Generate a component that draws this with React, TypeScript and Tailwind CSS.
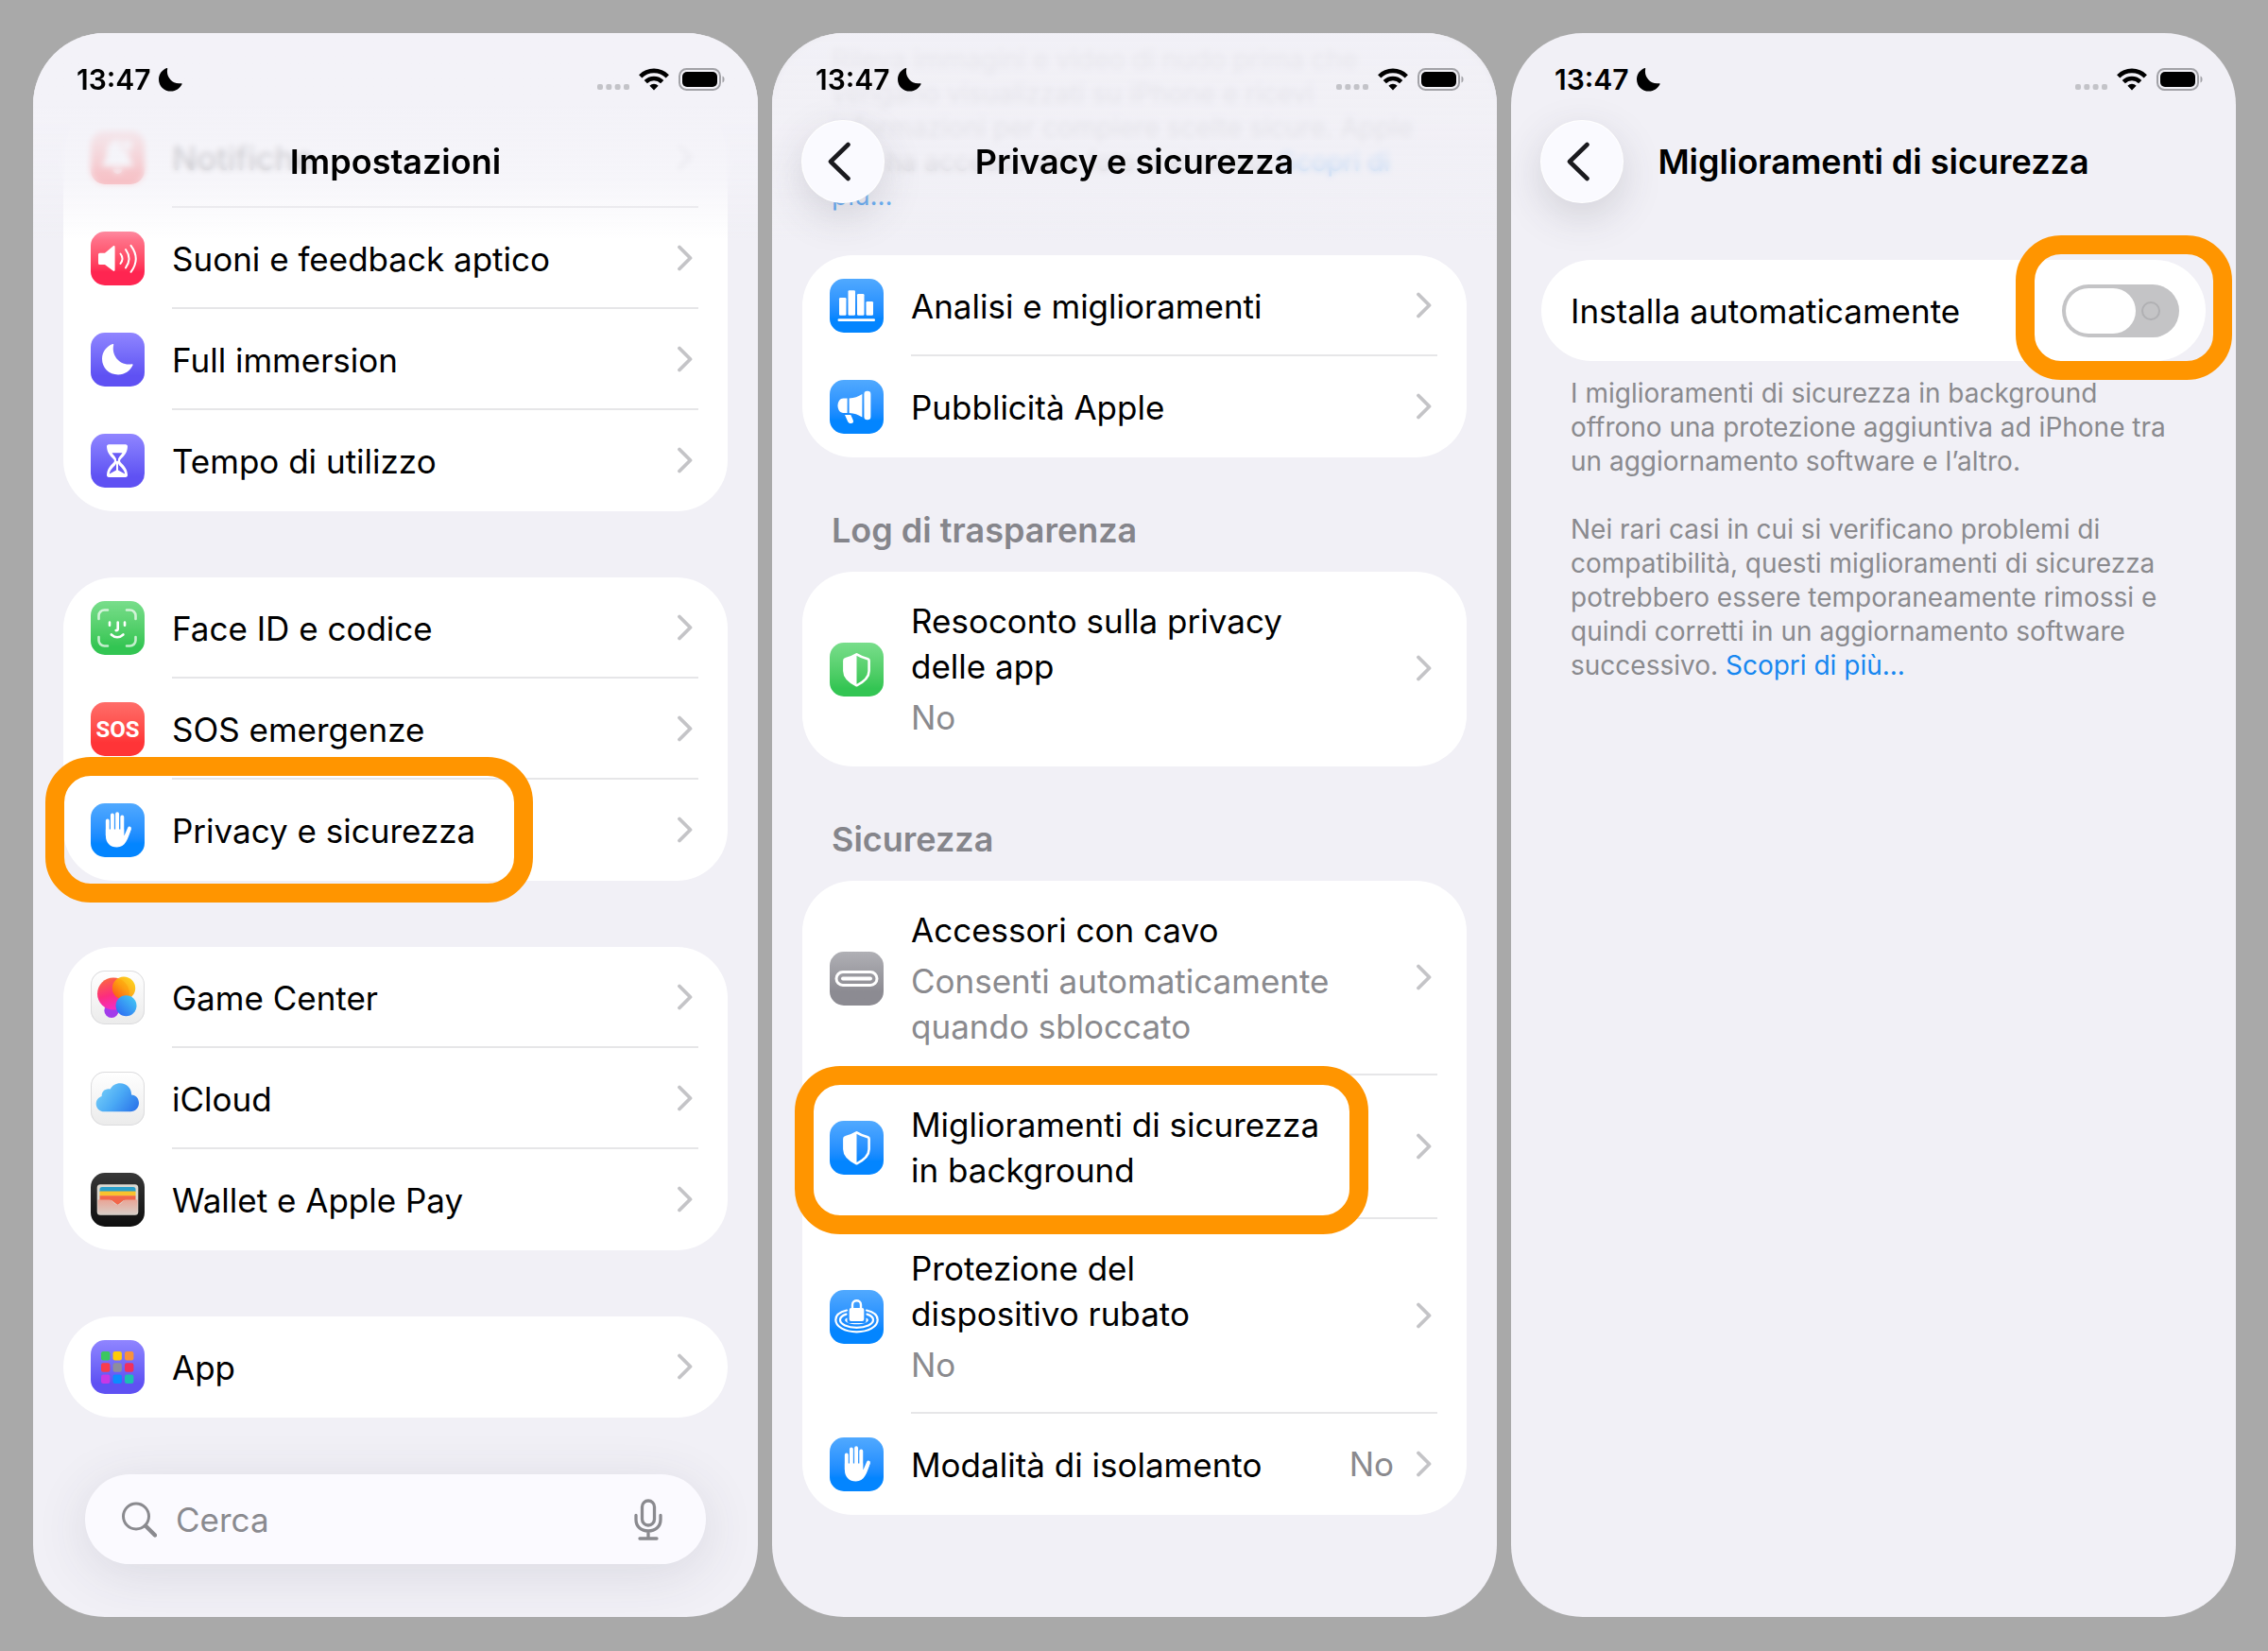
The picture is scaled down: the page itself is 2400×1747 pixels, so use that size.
import type { ReactNode } from 'react'
import clsx from 'clsx'

/* ---------- Glyphs, drawn on a 57x57 tile ---------- */

function BellGlyph() {
    return (
        <g fill="#fff">
            <path d="M28.5 10c-7 0-11 5-11.500 12-.5 8-2 10-4.500 13-1 1.500 0 3 1.500 3h29c1.500 0 2.500-1.500 1.500-3-2.500-3-4-5-4.500-13-.5-7-4.500-12-11.500-12z" />
            <path d="M23.500 41h10a5 5 0 0 1-10 0z" />
            <circle cx="38.500" cy="15.500" r="6" stroke="#ff6d69" strokeWidth="2" />
        </g>
    )
}

function SoundGlyph() {
    return (
        <g>
            <path
                d="M9.500 22.700H15l8.600-7.300c.9-.7 2-.3 2 .8v24.600c0 1.100-1.100 1.500-2 .8L15 35H9.500A1.500 1.500 0 0 1 8 33.500v-9.300a1.500 1.500 0 0 1 1.500-1.500z"
                fill="#fff"
            />
            <g fill="none" stroke="#fff" strokeWidth="2" strokeLinecap="round">
                <path d="M31.500 23.500q4 5.200 0 10.400" />
                <path d="M37 19q7 9.700 0 19.400" />
                <path d="M42.500 14.800q10.500 14 0 28" />
            </g>
        </g>
    )
}

function MoonGlyph() {
    return (
        <path
            d="M23.200 12.100c.6-.3 1.200.2 1 .9-2.500 10.500 6 22.500 19.300 20.300.8-.1 1.300.5 1 1.200C41.700 40.300 36 44.500 29 44.500c-9.600 0-17-7.300-17-16.700 0-7.200 4.500-13.200 11.200-15.700z"
            fill="#fff"
        />
    )
}

function HourglassGlyph() {
    return (
        <g>
            <path
                d="M19.200 11.300h17.600c1.500 0 2.300.9 2.200 2.500-.4 6.400-3.400 9.400-7.200 13.200-1 1-1 2.200 0 3.200 3.800 3.800 6.800 7 7.200 13.300.1 1.600-.7 2.500-2.200 2.500H19.200c-1.500 0-2.300-.9-2.200-2.500.4-6.300 3.400-9.500 7.200-13.300 1-1 1-2.200 0-3.200-3.800-3.800-6.800-6.800-7.200-13.200-.1-1.600.7-2.500 2.200-2.500z"
                fill="#fff"
            />
            <path d="M22.500 20.300h11c-1.500 2.600-4 4.200-4.500 6.500v4.400c.5 3 6.500 5.500 7.200 11.300L29 38.400v-9.600h-2v9.600l-7.200 4.100c.7-5.800 6.700-8.300 7.200-11.300v-4.400c-.5-2.300-3-3.900-4.500-6.500z" fill="#6a5cf6" />
        </g>
    )
}

function FaceGlyph() {
    return (
        <g fill="none" stroke="#fff" strokeWidth="2.600" strokeLinecap="round">
            <g opacity=".7">
                <path d="M8.500 19v-3.500a6 6 0 0 1 6-6H18" />
                <path d="M38 9.500h3.500a6 6 0 0 1 6 6V19" />
                <path d="M47.500 38v3.500a6 6 0 0 1-6 6H38" />
                <path d="M18 47.500h-3.500a6 6 0 0 1-6-6V38" />
            </g>
            <path d="M20 22.500v3.200M36 22.500v3.200M28.700 22.500v7c0 1.100-.7 1.600-2 1.600" />
            <path d="M21.800 35.500c3.800 3.600 8.800 3.600 12.600 0" />
        </g>
    )
}

function HandGlyph() {
    return (
        <g fill="#fff" stroke="#fff" strokeLinecap="round">
            <g strokeWidth="3.900">
                <path d="M17.800 18.500V34M22.900 12.500V34M28.100 11.300V34M33.300 14.500V34" />
                <path d="M41 26.500L36 38" />
            </g>
            <path
                d="M15.900 27.500h19.300v6.800c1.600-.6 2.800-3.400 4-6.800l3.600-.3c-1.600 5-3.300 10-5.500 13.600-2.200 3.700-5.200 5.700-9.600 5.700-7 0-11.800-4.500-11.800-12z"
                stroke="none"
            />
        </g>
    )
}

function GameCenterGlyph() {
    return (
        <g>
            <defs>
                <linearGradient id="gc-pink" x1="0" y1="0" x2=".3" y2="1">
                    <stop offset="0" stopColor="#fb7036" />
                    <stop offset=".6" stopColor="#fc2d7e" />
                    <stop offset="1" stopColor="#f52bc0" />
                </linearGradient>
                <linearGradient id="gc-sun" x1="1" y1="0" x2="0" y2="1">
                    <stop offset="0" stopColor="#fddc10" />
                    <stop offset=".5" stopColor="#fda50a" />
                    <stop offset="1" stopColor="#fb4a12" />
                </linearGradient>
                <linearGradient id="gc-blue" x1="1" y1="0" x2="0" y2="1">
                    <stop offset="0" stopColor="#45d0f5" />
                    <stop offset="1" stopColor="#2b62f2" />
                </linearGradient>
            </defs>
            <circle cx="22" cy="42.500" r="7.600" fill="#a23bea" />
            <circle cx="24" cy="24.500" r="17" fill="url(#gc-pink)" />
            <circle cx="35" cy="18.700" r="12.200" fill="url(#gc-sun)" opacity=".93" />
            <circle cx="37.500" cy="37.300" r="11" fill="url(#gc-blue)" />
        </g>
    )
}

function CloudGlyph() {
    return (
        <g>
            <defs>
                <linearGradient id="cloud-blue" x1="0" y1=".3" x2="1" y2=".8">
                    <stop offset="0" stopColor="#74cdf8" />
                    <stop offset=".5" stopColor="#4aa9f5" />
                    <stop offset="1" stopColor="#2c76ea" />
                </linearGradient>
            </defs>
            <path
                d="M14.500 42.300c-5 0-8.800-3.600-8.800-8.300 0-4 2.400-7 6-8.100-.6-4.500 4-8.700 8.900-7.300 2-4 5.900-6.300 10.500-6.300 7 0 12 5.200 12 12.100 4.600.1 7.900 3.800 7.900 8.700 0 5.200-3.800 9.200-9 9.200z"
                fill="url(#cloud-blue)"
            />
        </g>
    )
}

function WalletGlyph() {
    return (
        <g>
            <defs>
                <linearGradient id="wallet-pocket" x1="0" y1="0" x2="0" y2="1">
                    <stop offset="0" stopColor="#e9a596" />
                    <stop offset="1" stopColor="#d8cdc6" />
                </linearGradient>
            </defs>
            <rect x="6.700" y="12.300" width="43.600" height="32.400" rx="3.500" fill="#dcd8d0" />
            <path d="M9.500 20v-2.500a2.500 2.500 0 0 1 2.500-2.500h33a2.500 2.500 0 0 1 2.500 2.500V20z" fill="#2b9fc9" />
            <rect x="9.500" y="19.500" width="38" height="5" fill="#f9c22e" />
            <path d="M9.500 24.300h38V29H35l-6.500 5-6.500-5H9.500z" fill="#f2664a" />
            <path
                d="M7.500 28.500H20c1.500 0 2.200.8 3.300 2.200 3 4 7.400 4 10.400 0 1.100-1.400 1.800-2.200 3.300-2.200h12.500V41a3 3 0 0 1-3 3h-36a3 3 0 0 1-3-3z"
                fill="url(#wallet-pocket)"
            />
        </g>
    )
}

const appColors = ['#3cc760', '#ffcc0a', '#f8923c', '#f83c4c', '#8e8e9c', '#f0305e', '#c838e6', '#0a8cff', '#1cc0b0']

function AppGridGlyph() {
    return (
        <g>
            {appColors.map((color, i) => (
                <rect
                    key={color}
                    x={11 + (i % 3) * 12.5}
                    y={12 + Math.floor(i / 3) * 12.3}
                    width="9.400"
                    height="9.400"
                    rx="2.200"
                    fill={color}
                />
            ))}
        </g>
    )
}

function ChartGlyph() {
    return (
        <g fill="#fff">
            <rect x="10" y="20" width="7.500" height="18.700" rx="1.200" />
            <rect x="19.500" y="12.300" width="7.500" height="26.400" rx="1.200" />
            <rect x="29" y="16" width="7.500" height="22.700" rx="1.200" />
            <rect x="38.500" y="24" width="7.500" height="14.700" rx="1.200" />
            <rect x="8.500" y="42.300" width="39.500" height="2.700" rx="1.300" />
        </g>
    )
}

function MegaphoneGlyph() {
    return (
        <g fill="#fff">
            <path d="M18.600 19.500V35h-4.200c-3.500 0-5.900-3.300-5.900-7.700s2.400-7.800 5.900-7.800z" />
            <path d="M20.600 19.500c5.500-.3 9.500-1.800 13.800-4.500v24.500c-4.300-2.700-8.300-4.200-13.800-4.500z" />
            <rect x="36.400" y="11.700" width="7" height="30.600" rx="3.300" />
            <path d="M16 37h6.300l2.500 5.800c.8 2-.4 3.300-2.200 3.300-1.700 0-3-.8-3.600-2.300z" />
        </g>
    )
}

function ShieldGlyph() {
    return (
        <g>
            <path
                d="M28.500 12.300c3.500 2.200 7.400 3.700 11.800 4.900.9.200 1.300.8 1.300 1.700V30c0 7-5.500 11.500-13.100 15.300C20.900 41.500 15.400 37 15.400 30V18.900c0-.9.400-1.500 1.300-1.700 4.400-1.200 8.300-2.700 11.800-4.900z"
                fill="none"
                stroke="#fff"
                strokeWidth="2.600"
                strokeLinejoin="round"
            />
            <path d="M28.500 12.300v33C20.900 41.500 15.400 37 15.400 30V18.900c0-.9.400-1.500 1.300-1.700 4.400-1.200 8.300-2.700 11.800-4.900z" fill="#fff" />
        </g>
    )
}

function CablePortGlyph() {
    return (
        <g>
            <rect x="7" y="21.600" width="43" height="13.800" rx="6.900" fill="none" stroke="#fff" strokeWidth="3" />
            <rect x="12" y="26.500" width="33" height="4" rx="2" fill="#fff" />
        </g>
    )
}

function LockRipplesGlyph() {
    return (
        <g>
            <g fill="none" stroke="#fff" strokeWidth="2.200" strokeLinecap="round">
                <path d="M18 21.500C10.500 23.200 6.300 27 6.300 31.500c0 7.300 9.800 12.800 22.200 12.800s22.200-5.500 22.200-12.800c0-4.500-4.200-8.300-11.700-10" />
                <path d="M17.500 25.600c-4 1.300-6.500 3.500-6.500 6 0 4.800 7.700 8.200 17.500 8.200s17.500-3.400 17.500-8.200c0-2.500-2.500-4.700-6.500-6" />
            </g>
            <path d="M18.500 29.500c-1.500.7-2.300 1.500-2.300 2.300 0 2.600 5.500 4.500 12.300 4.500s12.300-1.900 12.300-4.500c0-.8-.8-1.600-2.300-2.300v3.300c0 1.500-1 2.200-2.400 2.200H20.900c-1.400 0-2.400-.7-2.400-2.200z" fill="#fff" />
            <rect x="20.700" y="19" width="15.600" height="14" rx="2" fill="#fff" />
            <path d="M24 19.500v-3.700c0-6 9-6 9 0v3.700" fill="none" stroke="#fff" strokeWidth="2.400" />
        </g>
    )
}

/* ---------- Building blocks ---------- */

const tones = {
    pink: 'bg-linear-to-b from-[#ff7d95] to-[#ff2551] to-75%',
    indigo: 'bg-linear-to-b from-[#9085ff] to-[#5f51f3] to-80%',
    green: 'bg-linear-to-b from-[#78de8b] to-[#33c553] to-85%',
    red: 'bg-linear-to-b from-[#ff6d69] to-[#ff3437] to-75%',
    blue: 'bg-linear-to-b from-[#50a9ff] to-[#0385ff] to-75%',
    gray: 'bg-linear-to-b from-[#b0b0b5] to-[#8c8b92] to-75%',
    white: 'bg-linear-to-b from-white to-[#ebebeb] ring-1 ring-inset ring-[#dcdcde]',
    black: 'bg-linear-to-b from-[#383838] to-[#0e0e0e]',
}

function Tile({ tone, children }: { tone: keyof typeof tones; children: ReactNode }) {
    return (
        <span className={clsx('block size-[57px] shrink-0 overflow-hidden rounded-[15px]', tones[tone])}>
            <svg viewBox="0 0 57 57" className="size-full" aria-hidden="true">
                {children}
            </svg>
        </span>
    )
}

function SosTile() {
    return (
        <span
            className={clsx(
                'flex size-[57px] shrink-0 items-center justify-center rounded-[15px] font-[Roboto,sans-serif] text-[24px] font-bold text-white',
                tones.red,
            )}
        >
            SOS
        </span>
    )
}

function Chevron() {
    return (
        <svg viewBox="0 0 16 28" className="h-7 w-4 shrink-0" aria-hidden="true">
            <path d="M2 2.500L13.500 14L2 25.500" fill="none" stroke="#c4c4c7" strokeWidth="3.800" strokeLinecap="round" strokeLinejoin="round" />
        </svg>
    )
}

interface RowProps {
    icon: ReactNode
    title: string
    detail?: string
    value?: string
    highlight?: string
}

function Row({ icon, title, detail, value, highlight }: RowProps) {
    return (
        <li className="group relative">
            <a href="#" className="flex min-h-[107px] items-stretch gap-[29px] pl-[29px]">
                <span className="flex items-center">{icon}</span>
                <span className="mr-[31px] flex flex-1 items-center border-b-2 border-[#e6e6e8] pr-1.5 group-last:border-transparent">
                    <span className="flex max-w-[460px] flex-1 flex-col gap-1.5 pt-7 pb-[26px] whitespace-pre-line">
                        <span>{title}</span>
                        {detail && <span className="text-[#8a8a8e]">{detail}</span>}
                    </span>
                    <span className="ml-auto flex items-center gap-6 text-[#8a8a8e]">
                        {value}
                        <Chevron />
                    </span>
                </span>
            </a>
            {highlight && <Highlight className={highlight} />}
        </li>
    )
}

function Highlight({ className }: { className: string }) {
    return (
        <span className={clsx('pointer-events-none absolute z-10 rounded-[48px] border-[20px] border-[#ff9500]', className)} />
    )
}

function Card({ children }: { children: ReactNode }) {
    return <ul className="rounded-[54px] bg-white">{children}</ul>
}

function SectionTitle({ children }: { children: ReactNode }) {
    return <h2 className="px-[31px] pt-[53px] pb-5 text-[36px] font-semibold text-[#85858b]">{children}</h2>
}

function StatusBar() {
    return (
        <div className="mb-6 flex h-10 items-center justify-between pr-[34px] pl-[46px]">
            <div className="flex items-center gap-2 text-[30px] leading-10 font-semibold">
                13:47
                <svg viewBox="0 0 33 33" className="size-[25px]" aria-hidden="true">
                    <path d="M11.200 .1c.6-.3 1.200.2 1 .9-2.500 10.500 6 22.500 19.300 20.300.8-.1 1.300.5 1 1.200C29.700 28.300 24 32.500 17 32.500 7.400 32.500 0 25.200 0 15.800 0 8.600 4.500 2.600 11.200.1z" />
                </svg>
            </div>
            <div className="flex items-center gap-2.5">
                <svg viewBox="0 0 34 24" className="h-6 w-[34px]" fill="#c3c3c8" aria-hidden="true">
                    <rect x="0" y="17" width="6" height="6" rx="2" />
                    <rect x="9.300" y="17" width="6" height="6" rx="2" />
                    <rect x="18.600" y="17" width="6" height="6" rx="2" />
                    <rect x="28" y="17" width="6" height="6" rx="2" />
                </svg>
                <svg viewBox="0 0 32 24" className="h-6 w-8" aria-hidden="true">
                    <g fill="none" stroke="#000" strokeWidth="4.600">
                        <path d="M1.700 8.800a20.300 20.300 0 0 1 28.600 0" />
                        <path d="M7.300 14.600a12.300 12.300 0 0 1 17.400 0" />
                    </g>
                    <path d="M16 23.400l-4.600-4.700a6.600 6.600 0 0 1 9.200 0z" />
                </svg>
                <svg viewBox="0 0 50 24" className="h-6 w-[50px]" aria-hidden="true">
                    <rect x="1" y="1" width="43" height="22" rx="7.500" fill="none" stroke="#a2a2a7" strokeWidth="2" />
                    <rect x="4" y="4" width="37" height="16" rx="5" />
                    <path d="M46.500 8.500c2.700.8 2.700 6.200 0 7z" fill="#a2a2a7" />
                </svg>
            </div>
        </div>
    )
}

function TopBar({ title, back = false }: { title: string; back?: boolean }) {
    return (
        <header className="relative pt-[29px]">
            <StatusBar />
            <div className="grid h-[86px] grid-cols-[86px_1fr_86px] items-center px-8">
                {back && (
                    <button
                        type="button"
                        aria-label="Indietro"
                        className="flex size-[86px] items-center justify-center rounded-full bg-[#fafaff] shadow-[0_14px_44px_rgba(60,60,80,0.18)] ring-1 ring-white"
                    >
                        <svg viewBox="0 0 26 42" className="mr-2 h-[42px] w-[26px]" aria-hidden="true">
                            <path d="M22.500 3L4 21l18.500 18" fill="none" stroke="#1a1a1e" strokeWidth="4.600" strokeLinecap="round" strokeLinejoin="round" />
                        </svg>
                    </button>
                )}
                <h1 className="col-start-2 text-center text-[36px] font-semibold whitespace-nowrap">{title}</h1>
            </div>
        </header>
    )
}

/* Bar floating over scrolled content, which fades and blurs under it */
function FloatingTopBar({ title, back, fade }: { title: string; back?: boolean; fade: string }) {
    return (
        <div className="absolute inset-x-0 top-0 z-20">
            <div className="absolute inset-x-0 top-0 h-[176px] mask-b-from-80% backdrop-blur-[3px]" />
            <div className={clsx('absolute inset-x-0 top-0 h-[220px] bg-linear-to-b', fade)} />
            <TopBar title={title} back={back} />
        </div>
    )
}

function Phone({ children }: { children: ReactNode }) {
    return (
        <section className="relative flex flex-col overflow-hidden rounded-[76px] bg-[#f1f0f6] text-[35px] leading-[48px] text-black">
            {children}
        </section>
    )
}

/* ---------- Screens ---------- */

function SettingsScreen() {
    return (
        <Phone>
            <FloatingTopBar title="Impostazioni" fade="from-[#f3f2f8] from-35% via-[#f3f2f8]/75 via-70% to-[#f3f2f8]/0" />
            <main className="flex flex-col gap-[70px] px-8 pt-[78px]">
                <Card>
                    <Row icon={<Tile tone="red"><BellGlyph /></Tile>} title="Notifiche" />
                    <Row icon={<Tile tone="pink"><SoundGlyph /></Tile>} title="Suoni e feedback aptico" />
                    <Row icon={<Tile tone="indigo"><MoonGlyph /></Tile>} title="Full immersion" />
                    <Row icon={<Tile tone="indigo"><HourglassGlyph /></Tile>} title="Tempo di utilizzo" />
                </Card>
                <Card>
                    <Row icon={<Tile tone="green"><FaceGlyph /></Tile>} title="Face ID e codice" />
                    <Row icon={<SosTile />} title="SOS emergenze" />
                    <Row
                        icon={<Tile tone="blue"><HandGlyph /></Tile>}
                        title="Privacy e sicurezza"
                        highlight="-top-6 -bottom-[23px] -left-[19px] right-[206px]"
                    />
                </Card>
                <Card>
                    <Row icon={<Tile tone="white"><GameCenterGlyph /></Tile>} title="Game Center" />
                    <Row icon={<Tile tone="white"><CloudGlyph /></Tile>} title="iCloud" />
                    <Row icon={<Tile tone="black"><WalletGlyph /></Tile>} title="Wallet e Apple Pay" />
                </Card>
                <Card>
                    <Row icon={<Tile tone="indigo"><AppGridGlyph /></Tile>} title="App" />
                </Card>
            </main>
            <div className="mx-[55px] mt-[60px] mb-[55px] flex h-[95px] items-center rounded-full bg-[#fbfaff] pr-[46px] pl-[38px] shadow-[0_10px_56px_rgba(60,60,80,0.12)]">
                <label htmlFor="search" aria-label="Cerca" className="mr-5 shrink-0">
                    <svg viewBox="0 0 38 38" className="size-[38px]" fill="none" stroke="#8a8a8f" strokeLinecap="round" aria-hidden="true">
                        <circle cx="16" cy="15.500" r="13.500" strokeWidth="3" />
                        <path d="M26 25.500l10 10" strokeWidth="4.400" />
                    </svg>
                </label>
                <input
                    id="search"
                    type="search"
                    placeholder="Cerca"
                    className="h-12 min-w-0 flex-1 bg-transparent outline-none placeholder:text-[#8a8a8f]"
                />
                <button type="button" aria-label="Detta">
                    <svg viewBox="0 0 30 44" className="h-11 w-[30px]" fill="none" stroke="#8a8a8f" strokeWidth="3.300" strokeLinecap="round" aria-hidden="true">
                        <rect x="8.500" y="2" width="13" height="26" rx="6.500" />
                        <path d="M2 17.500v4.500c0 7.500 5.500 12 13 12s13-4.500 13-12v-4.500M15 34v7.500M6 42h18" />
                    </svg>
                </button>
            </div>
        </Phone>
    )
}

function PrivacyScreen() {
    return (
        <Phone>
            <FloatingTopBar title="Privacy e sicurezza" back fade="from-[#f1f0f6]/92 via-[#f1f0f6]/86 via-60% to-[#f1f0f6]/0" />
            <main className="px-8 pt-2.5">
                <p className="mb-[45px] px-[31px] text-[28px] leading-9 whitespace-pre text-[#8a8a8e]">
                    {'Rileva immagini e video di nudo prima che\nvengano visualizzati su iPhone e ricevi\ninformazioni per compiere scelte sicure. Apple\nnon ha accesso alle foto o ai video. '}
                    <a href="#" className="text-[#1787f0]">
                        {'Scopri di\npiù...'}
                    </a>
                </p>
                <Card>
                    <Row icon={<Tile tone="blue"><ChartGlyph /></Tile>} title="Analisi e miglioramenti" />
                    <Row icon={<Tile tone="blue"><MegaphoneGlyph /></Tile>} title="Pubblicità Apple" />
                </Card>
                <SectionTitle>Log di trasparenza</SectionTitle>
                <Card>
                    <Row icon={<Tile tone="green"><ShieldGlyph /></Tile>} title="Resoconto sulla privacy delle app" detail="No" />
                </Card>
                <SectionTitle>Sicurezza</SectionTitle>
                <Card>
                    <Row
                        icon={<Tile tone="gray"><CablePortGlyph /></Tile>}
                        title="Accessori con cavo"
                        detail="Consenti automaticamente quando sbloccato"
                    />
                    <Row
                        icon={<Tile tone="blue"><ShieldGlyph /></Tile>}
                        title="Miglioramenti di sicurezza in background"
                        highlight="-top-2.5 -bottom-4 -left-2 right-[104px]"
                    />
                    <Row icon={<Tile tone="blue"><LockRipplesGlyph /></Tile>} title={'Protezione del\ndispositivo rubato'} detail="No" />
                    <Row icon={<Tile tone="blue"><HandGlyph /></Tile>} title="Modalità di isolamento" value="No" />
                </Card>
            </main>
        </Phone>
    )
}

function ImprovementsScreen() {
    return (
        <Phone>
            <TopBar title="Miglioramenti di sicurezza" back />
            <main className="px-8 pt-[61px]">
                <div className="relative flex h-[107px] items-center justify-between rounded-[54px] bg-white pr-7 pl-[31px]">
                    <label htmlFor="auto-install">Installa automaticamente</label>
                    <span className="grid items-center">
                        <input
                            id="auto-install"
                            type="checkbox"
                            role="switch"
                            className="peer col-start-1 row-start-1 h-14 w-[124px] appearance-none rounded-full bg-[#c4c4c6]"
                        />
                        <span className="pointer-events-none col-start-1 row-start-1 flex items-center justify-between pr-5 pl-1">
                            <span className="h-12 w-[74px] rounded-full bg-white" />
                            <span className="size-5 rounded-full border-2 border-[#b0b0b3]" />
                        </span>
                    </span>
                    <Highlight className="-top-[26px] -right-7 -bottom-5 w-[229px]" />
                </div>
                <div className="mt-4 flex flex-col gap-9 px-[31px] text-[28px] leading-9 whitespace-pre text-[#8a8a8e]">
                    <p>{'I miglioramenti di sicurezza in background\noffrono una protezione aggiuntiva ad iPhone tra\nun aggiornamento software e l’altro.'}</p>
                    <p>
                        {'Nei rari casi in cui si verificano problemi di\ncompatibilità, questi miglioramenti di sicurezza\npotrebbero essere temporaneamente rimossi e\nquindi corretti in un aggiornamento software\nsuccessivo. '}
                        <a href="#" className="text-[#1787f0]">
                            Scopri di più...
                        </a>
                    </p>
                </div>
            </main>
        </Phone>
    )
}

export default function App() {
    return (
        <div className="grid min-h-screen grid-cols-3 gap-[15px] bg-[#a9a9a9] pt-[35px] pr-[34px] pb-9 pl-[35px] font-[Inter,'Liberation_Sans',sans-serif]">
            <SettingsScreen />
            <PrivacyScreen />
            <ImprovementsScreen />
        </div>
    )
}
